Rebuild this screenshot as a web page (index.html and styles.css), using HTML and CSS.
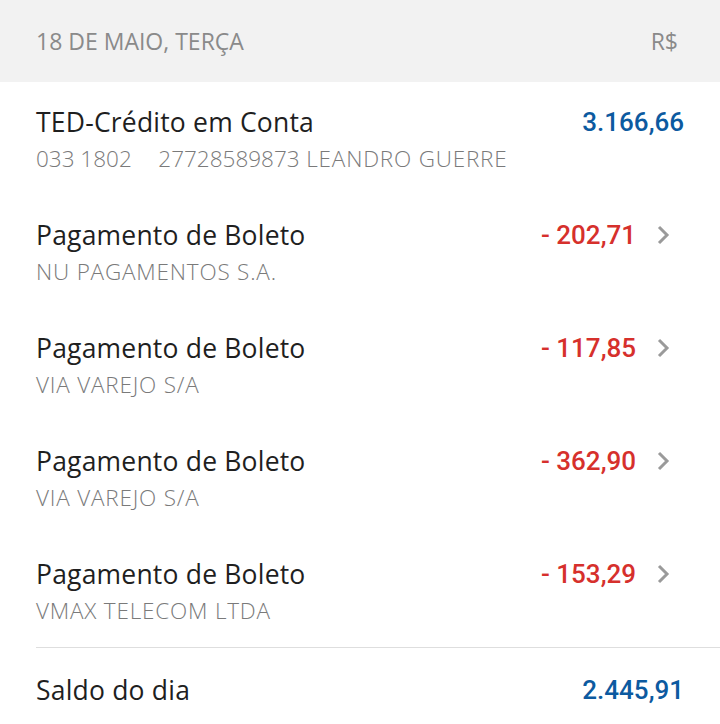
FILE: index.html
```html
<!DOCTYPE html>
<html lang="pt-BR">
<head>
<meta charset="utf-8">
<link rel="stylesheet" href="styles.css">
</head>
<body>
<div class="screen">
  <div class="day-header">
    <span class="date">18 DE MAIO, TERÇA</span>
    <span class="currency">R$</span>
  </div>
  <div class="list">
    <div class="row">
      <div class="info">
        <div class="title">TED-Crédito em Conta</div>
        <div class="sub"><span class="num">033 1802</span>&nbsp;&nbsp;&nbsp;&nbsp;<span class="num">27728589873</span> LEANDRO GUERRE</div>
      </div>
      <div class="amount credit">3.166,66</div>
    </div>
    <div class="row link">
      <div class="info">
        <div class="title">Pagamento de Boleto</div>
        <div class="sub">NU PAGAMENTOS S.A.</div>
      </div>
      <div class="amount debit">- 202,71</div>
      <svg class="chev" viewBox="0 0 14 22"><path d="M3 3 L11 11 L3 19"/></svg>
    </div>
    <div class="row link">
      <div class="info">
        <div class="title">Pagamento de Boleto</div>
        <div class="sub">VIA VAREJO S/A</div>
      </div>
      <div class="amount debit">- 117,85</div>
      <svg class="chev" viewBox="0 0 14 22"><path d="M3 3 L11 11 L3 19"/></svg>
    </div>
    <div class="row link">
      <div class="info">
        <div class="title">Pagamento de Boleto</div>
        <div class="sub">VIA VAREJO S/A</div>
      </div>
      <div class="amount debit">- 362,90</div>
      <svg class="chev" viewBox="0 0 14 22"><path d="M3 3 L11 11 L3 19"/></svg>
    </div>
    <div class="row link">
      <div class="info">
        <div class="title">Pagamento de Boleto</div>
        <div class="sub">VMAX TELECOM LTDA</div>
      </div>
      <div class="amount debit">- 153,29</div>
      <svg class="chev" viewBox="0 0 14 22"><path d="M3 3 L11 11 L3 19"/></svg>
    </div>
  </div>
  <div class="balance">
    <div class="title">Saldo do dia</div>
    <div class="amount credit">2.445,91</div>
  </div>
</div>
</body>
</html>
```

FILE: styles.css
```css
* { box-sizing: border-box; }
html, body { margin: 0; padding: 0; background: #fff; }
body {
  font-family: "Open Sans", "Liberation Sans", sans-serif;
  width: 720px;
  height: 724px;
  overflow: hidden;
}
.day-header {
  height: 82px;
  background: #f2f2f2;
  display: flex;
  align-items: center;
  justify-content: space-between;
  padding: 0 42px 0 36px;
  color: #8a8a8a;
  font-size: 23px;
}
.row {
  height: 113px;
  padding: 22px 36px 0 36px;
  display: flex;
  align-items: flex-start;
}
.row.link { padding-right: 50px; }
.info { flex: 1; }
.title {
  font-size: 26.5px;
  letter-spacing: 0.2px;
  line-height: 36px;
  color: #1f1f1f;
}
.sub {
  font-size: 22.5px;
  letter-spacing: 0.8px;
  line-height: 38px;
  color: #7a7a7a;
  font-weight: 300;
}
.sub .num { letter-spacing: 0; }
.amount {
  font-family: "Roboto", "Liberation Sans", sans-serif;
  font-size: 26px;
  line-height: 36px;
  font-weight: 500;
}
.credit { color: #0c5aa0; }
.debit { color: #d6302c; }
.chev {
  width: 14px;
  height: 22px;
  margin: 7px 0 0 20px;
  fill: none;
  stroke: #9a9a9a;
  stroke-width: 3;
}
.balance {
  border-top: 1px solid #dedede;
  margin-left: 36px;
  padding: 24px 36px 0 0;
  display: flex;
  justify-content: space-between;
}
```
